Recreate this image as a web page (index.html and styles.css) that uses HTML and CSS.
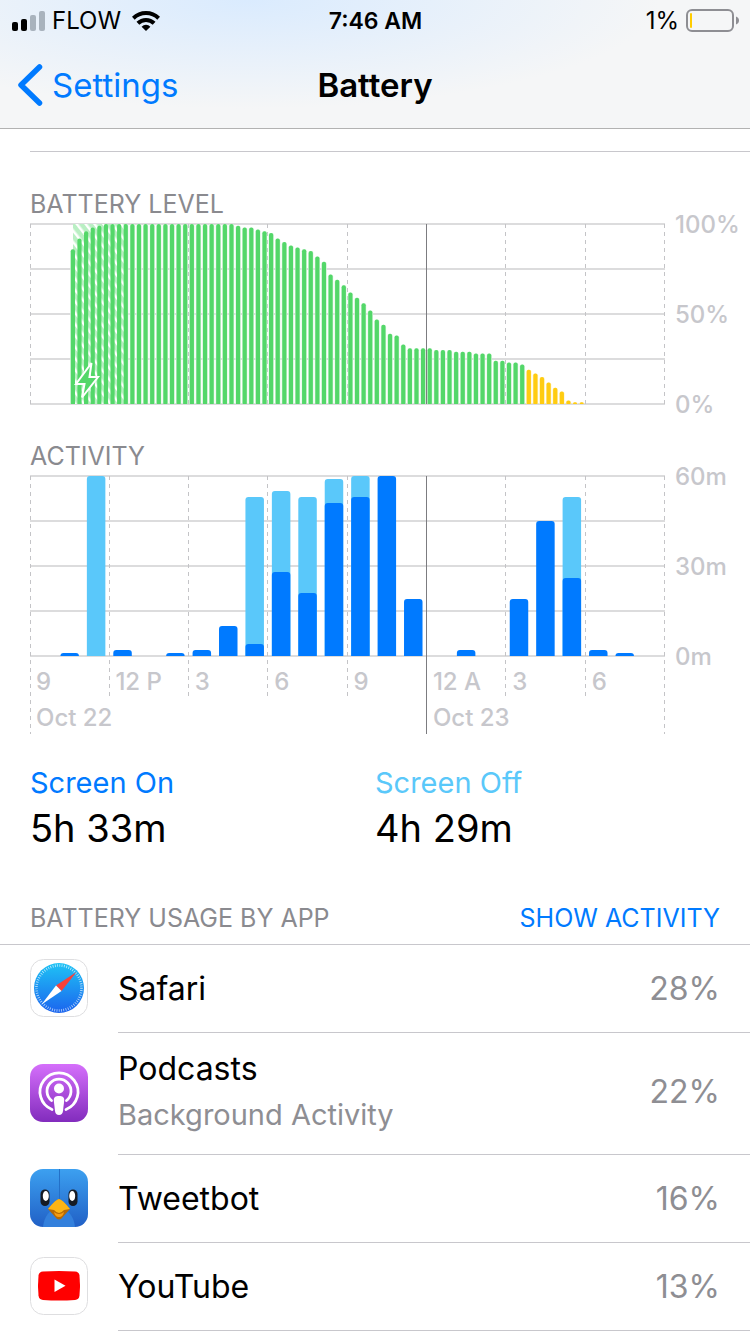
FILE: index.html
```html
<!DOCTYPE html>
<html lang="en">
<head>
    <meta charset="UTF-8">
    <meta name="viewport" content="width=device-width, initial-scale=1.0">
    <title>Battery</title>
    <link rel="stylesheet" href="styles.css">
</head>
<body>
    <header class="top">
        <div class="status">
            <div class="carrier">
                <svg class="signal" width="33" height="20" viewBox="0 0 33 20">
                    <rect x="0" y="11" width="6" height="9" rx="2"/>
                    <rect x="9" y="8" width="6" height="12" rx="2"/>
                    <rect x="18" y="4" width="6" height="16" rx="2" fill="#a9b3bd"/>
                    <rect x="27" y="0" width="6" height="20" rx="2" fill="#a9b3bd"/>
                </svg>
                <span>FLOW</span>
                <svg class="wifi" width="28" height="20" viewBox="0 0 28 20">
                    <g fill="none" stroke="#000" stroke-width="4">
                        <path d="M1.300 7.200a18.200 18.200 0 0 1 25.400 0"/>
                        <path d="M5.900 12.300a11.600 11.600 0 0 1 16.200 0"/>
                    </g>
                    <path d="M14 20l-4.400-4.300a6.200 6.200 0 0 1 8.800 0z"/>
                </svg>
            </div>
            <time class="clock">7:46 AM</time>
            <div class="charge">
                <span>1%</span>
                <svg width="53" height="24" viewBox="0 0 53 24">
                    <rect x="1" y="1" width="46" height="21" rx="5" fill="none" stroke="#8e8e93" stroke-width="2"/>
                    <rect x="4" y="4" width="2" height="15" rx="1" fill="#fc0"/>
                    <path d="M50 7.500q3 1.200 3 4t-3 4z" fill="#8e8e93"/>
                </svg>
            </div>
        </div>
        <nav class="nav">
            <a class="back" href="#">
                <svg width="26" height="42" viewBox="0 0 26 42">
                    <path d="M21.500 3L3 21l18.500 18" fill="none" stroke="#007aff" stroke-width="5.500" stroke-linecap="round" stroke-linejoin="round"/>
                </svg>
                Settings
            </a>
            <h1>Battery</h1>
        </nav>
    </header>

    <main>
        <section class="charts">
            <h2>BATTERY LEVEL</h2>
            <div class="chart">
                <div class="plot">
                    <svg id="level" class="level" viewBox="0 0 635 182" preserveAspectRatio="none">
                        <defs>
                            <pattern id="hatch" width="7" height="8" patternUnits="userSpaceOnUse" patternTransform="rotate(-38)">
                                <rect width="7" height="8" fill="#b9efc3"/>
                                <rect width="2.500" height="8" fill="#fff"/>
                            </pattern>
                        </defs>
                    </svg>
                </div>
                <div class="scale"><span>100%</span><span>50%</span><span>0%</span></div>
            </div>

            <h2>ACTIVITY</h2>
            <div class="chart">
                <div class="plot">
                    <svg id="activity" class="activity" viewBox="0 0 635 259" preserveAspectRatio="none"></svg>
                    <div class="axis">
                        <span>9</span><span>12 P</span><span>3</span><span>6</span>
                        <span>9</span><span>12 A</span><span>3</span><span>6</span>
                        <span class="day">Oct 22</span><span class="day next">Oct 23</span>
                    </div>
                </div>
                <div class="scale"><span>60m</span><span>30m</span><span>0m</span></div>
            </div>
        </section>

        <dl class="totals">
            <div>
                <dt class="on">Screen On</dt>
                <dd>5h 33m</dd>
            </div>
            <div>
                <dt class="off">Screen Off</dt>
                <dd>4h 29m</dd>
            </div>
        </dl>

        <section class="usage">
            <div class="usage-head">
                <h2>BATTERY USAGE BY APP</h2>
                <button type="button">SHOW ACTIVITY</button>
            </div>
            <ul class="apps">
                <li>
                    <svg class="icon" viewBox="0 0 58 58">
                        <defs>
                            <linearGradient id="safari" x2="0" y2="1">
                                <stop offset="0" stop-color="#1fc3f5"/>
                                <stop offset="1" stop-color="#1b64ee"/>
                            </linearGradient>
                        </defs>
                        <rect x=".5" y=".5" width="57" height="57" rx="13" fill="#fff" stroke="#dedee0"/>
                        <circle cx="29" cy="29" r="25" fill="url(#safari)"/>
                        <circle cx="29" cy="29" r="22.500" fill="none" stroke="#fff" stroke-opacity=".7" stroke-width="2.600" stroke-dasharray=".8 1.500"/>
                        <path d="M46.500 13L31.500 32l-5.500-5.500z" fill="#f8413a"/>
                        <path d="M11.500 45.500L26 26.500l5.500 5.500z" fill="#fff"/>
                    </svg>
                    <div class="row">
                        <div class="name">Safari</div>
                        <div class="share">28%</div>
                    </div>
                </li>
                <li>
                    <svg class="icon" viewBox="0 0 58 58">
                        <defs>
                            <linearGradient id="podcasts" x2="0" y2="1">
                                <stop offset="0" stop-color="#d56ffb"/>
                                <stop offset="1" stop-color="#822cbd"/>
                            </linearGradient>
                        </defs>
                        <rect width="58" height="58" rx="13" fill="url(#podcasts)"/>
                        <g fill="none" stroke="#fff" stroke-width="2.800" stroke-linecap="round">
                            <path d="M22 45.500a19 19 0 1 1 14 0"/>
                            <path d="M21.500 36.500a12 12 0 1 1 15 0"/>
                        </g>
                        <circle cx="29" cy="24.500" r="5" fill="#fff"/>
                        <path d="M29 32c3.500 0 5.500 1.400 5.200 4.500l-1.200 10.500c-.3 2.600-1.700 4-4 4s-3.700-1.400-4-4l-1.200-10.500c-.3-3.100 1.700-4.500 5.200-4.500z" fill="#fff"/>
                    </svg>
                    <div class="row tall">
                        <div class="name">Podcasts<small>Background Activity</small></div>
                        <div class="share">22%</div>
                    </div>
                </li>
                <li>
                    <svg class="icon" viewBox="0 0 58 58">
                        <defs>
                            <linearGradient id="tweetbot" x2="0" y2="1">
                                <stop offset="0" stop-color="#3ca0f0"/>
                                <stop offset="1" stop-color="#2160c6"/>
                            </linearGradient>
                        </defs>
                        <rect width="58" height="58" rx="13" fill="url(#tweetbot)"/>
                        <path d="M13 58c1-10 6-17 16-21 10 4 15 11 16 21z" fill="#3380dc"/>
                        <path d="M29.500 0v31" stroke="#2370c8" stroke-width="1"/>
                        <rect x="10.500" y="20.500" width="9" height="16.500" rx="4.500" fill="#161b24"/>
                        <rect x="38.500" y="20.500" width="9" height="16.500" rx="4.500" fill="#161b24"/>
                        <ellipse cx="15.800" cy="27" rx="3" ry="5" fill="#fff"/>
                        <ellipse cx="42.200" cy="27" rx="3" ry="5" fill="#fff"/>
                        <path d="M29 30q2 0 11 10l-8.500 9.500q-2.500 2-5 0L18 40q9-10 11-10z" fill="#b66a05"/>
                        <path d="M29 30q3 0 11 10l-6 1q-5 6-10 0l-6-1q8-10 11-10z" fill="#fdb515"/>
                        <path d="M24 43q5 4 10 0-1 5-5 5t-5-5z" fill="#f59c12"/>
                    </svg>
                    <div class="row">
                        <div class="name">Tweetbot</div>
                        <div class="share">16%</div>
                    </div>
                </li>
                <li>
                    <svg class="icon" viewBox="0 0 58 58">
                        <rect x=".5" y=".5" width="57" height="57" rx="13" fill="#fff" stroke="#dedee0"/>
                        <path d="M13 14.500q16-1 32 0 4 .3 4.500 4 1 10 0 20-.5 4-4.500 4.500-16 1-32 0-4-.5-4.500-4.500-1-10 0-20 .5-3.700 4.500-4z" fill="#f00"/>
                        <path d="M24.500 22.500l11 6.200-11 6.200z" fill="#fff"/>
                    </svg>
                    <div class="row">
                        <div class="name">YouTube</div>
                        <div class="share">13%</div>
                    </div>
                </li>
            </ul>
        </section>
    </main>

    <script src="script.js"></script>
</body>
</html>
```
FILE: styles.css
```css
* {
    box-sizing: border-box;
}
body {
    margin: 0;
    background: #fff;
    color: #000;
    font-family: Inter, "Liberation Sans", sans-serif;
}
h1, h2, dl, dd, ul {
    margin: 0;
    padding: 0;
}
svg {
    display: block;
}
.top {
    background: radial-gradient(ellipse 55% 85% at 33% 0, #daebfe, rgba(246, 247, 249, 0)), #f5f6f7;
    border-bottom: 1px solid #b2b2b2;
}
.status {
    display: grid;
    grid-template-columns: 1fr auto 1fr;
    align-items: center;
    height: 41px;
    padding: 0 11px 0 12px;
    font-size: 24px;
}
.carrier, .charge {
    display: flex;
    align-items: center;
    gap: 7px;
}
.wifi {
    margin-left: 4px;
}
.charge {
    justify-content: flex-end;
}
.clock {
    font-size: 23px;
    font-weight: 600;
}
.nav {
    display: grid;
    grid-template-columns: 1fr auto 1fr;
    align-items: center;
    height: 87px;
    padding: 0 18px;
}
.back {
    display: flex;
    align-items: center;
    gap: 8px;
    color: #007aff;
    font-size: 33px;
    text-decoration: none;
}
h1 {
    font-size: 33px;
    font-weight: 600;
}
h2 {
    color: #8a8a8f;
    font-size: 25px;
    font-weight: 400;
    line-height: 38px;
}
.charts {
    margin: 22px 0 0 30px;
    padding-top: 33px;
    border-top: 1px solid #c8c7cc;
}
.chart {
    display: grid;
    grid-template-columns: 1fr 85px;
}
.chart + h2 {
    margin-top: 32px;
}
.plot {
    display: grid;
}
.plot > * {
    grid-area: 1 / 1;
}
.plot svg {
    width: 100%;
}
.level {
    height: 182px;
}
.activity {
    height: 259px;
}
.scale {
    display: flex;
    flex-direction: column;
    justify-content: space-between;
    height: 204px;
    margin: -10px 0 -12px;
    padding-left: 10px;
    color: #c7c7cc;
    font-size: 24px;
    font-weight: 500;
    line-height: 24px;
}
.axis {
    display: grid;
    grid-template-columns: repeat(8, 1fr);
    align-self: start;
    padding-top: 189px;
    color: #c7c7cc;
    font-size: 24px;
    font-weight: 500;
    line-height: 36px;
}
.axis span {
    padding-left: 6px;
    white-space: nowrap;
}
.axis .day {
    grid-column: 1 / span 5;
}
.axis .next {
    grid-column: 6 / span 3;
}
.totals {
    display: grid;
    grid-template-columns: 1fr 1fr;
    padding: 28px 30px 0;
}
.totals dt {
    font-size: 29px;
    line-height: 38px;
}
.totals dd {
    font-size: 38px;
    line-height: 52px;
}
.on {
    color: #007aff;
}
.off {
    color: #5ac8fa;
}
.usage {
    margin-top: 38px;
}
.usage-head {
    display: flex;
    justify-content: space-between;
    align-items: center;
    padding: 0 30px;
    height: 53px;
    border-bottom: 1px solid #c8c7cc;
}
.usage-head button {
    padding: 0;
    border: none;
    background: none;
    color: #007aff;
    font: inherit;
    font-size: 25px;
    cursor: pointer;
}
.apps {
    list-style: none;
}
.apps li {
    display: flex;
    align-items: center;
    gap: 30px;
    padding-left: 30px;
}
.icon {
    flex: none;
    width: 58px;
    height: 58px;
    margin-bottom: 2px;
}
.row {
    flex: 1;
    display: flex;
    justify-content: space-between;
    align-items: center;
    height: 88px;
    padding-right: 30px;
    border-bottom: 1px solid #c8c7cc;
}
.tall {
    height: 122px;
    padding-bottom: 4px;
}
.name {
    font-size: 32px;
    line-height: 46px;
}
.name small {
    display: block;
    color: #8e8e93;
    font-size: 29px;
}
.share {
    color: #8e8e93;
    font-size: 32px;
}
```
FILE: script.js
```js
const NS = 'http://www.w3.org/2000/svg';
const HOUR = 26.43;

// battery percent, one reading every 15 minutes
const levels = [
    86, 92, 96, 98, 99, 100, 100, 100, 100, 100, 100, 100, 100, 100, 100, 100,
    100, 100, 100, 100, 100, 100, 100, 100, 100, 99, 98, 98, 97, 96, 95, 92,
    90, 88, 87, 86, 85, 82, 79, 72, 69, 66, 62, 59, 56, 52, 47, 44,
    39, 38, 33, 31, 31, 31, 31, 30, 30, 30, 29, 29, 29, 28, 28, 28,
    24, 24, 23, 23, 22, 19, 17, 15, 12, 9, 7, 2, 1, 1
];

// minutes per hour: [screen on, screen on + off]
const activity = [
    [0, 0], [1, 1], [0, 60], [2, 2], [0, 0], [1, 1], [2, 2], [10, 10],
    [4, 53], [28, 55], [21, 53], [51, 59], [53, 60], [60, 60], [19, 19], [0, 0],
    [2, 2], [0, 0], [19, 19], [45, 45], [26, 53], [2, 2], [1, 1], [0, 0]
];

function add(svg, name, attrs) {
    const el = document.createElementNS(NS, name);
    for (const key in attrs) {
        el.setAttribute(key, attrs[key]);
    }
    svg.appendChild(el);
}

function drawGrid(svg, hourEnd, dayEnd) {
    for (let i = 0; i < 5; i++) {
        add(svg, 'path', { d: `M0 ${i * 45 + 1}H635`, stroke: '#dcdcdd', 'stroke-width': 2 });
    }
    for (let i = 0; i <= 8; i++) {
        const end = i % 8 === 0 ? dayEnd : hourEnd;
        const x = Math.floor(i * HOUR * 3) + 0.5;
        if (i !== 5) {
            add(svg, 'path', { d: `M${x} 1V${end}`, stroke: '#c4c4c7', 'stroke-dasharray': '4 4' });
        }
    }
}

function drawMidnight(svg, end) {
    add(svg, 'path', { d: `M396.5 1V${end}`, stroke: '#7c7c80' });
}

// rounded on top, square at the base line
function drawBar(svg, x, width, height, radius, fill) {
    const r = Math.min(radius, height);
    add(svg, 'path', {
        d: `M${x} 181v${r - height}q0 ${-r} ${r} ${-r}h${width - 2 * r}q${r} 0 ${r} ${r}v${height - r}z`,
        fill: fill
    });
}

function drawLevel() {
    const svg = document.getElementById('level');
    drawGrid(svg, 181, 181);
    // pale edge beside every bar
    levels.forEach((value, i) => {
        drawBar(svg, 40.2 + i * HOUR / 4, 5.4, value * 1.8, 2, value < 20 ? '#fff3c4' : '#dcf6e1');
    });
    add(svg, 'rect', { x: 43, y: 1, width: 53, height: 180, fill: 'url(#hatch)' });
    levels.forEach((value, i) => {
        drawBar(svg, 40.8 + i * HOUR / 4, 4.2, value * 1.8, 2, value < 20 ? '#fc1' : '#53d769');
    });
    add(svg, 'path', {
        d: 'M61.500 140L46 161h8.500L52 174.500 68 154h-8.500z',
        fill: '#53d769', stroke: '#fff', 'stroke-width': 2
    });
    drawMidnight(svg, 181);
}

function drawActivity() {
    const svg = document.getElementById('activity');
    drawGrid(svg, 225, 259);
    activity.forEach(([on, total], i) => {
        const x = i * HOUR + 4;
        if (total > on) {
            drawBar(svg, x, 18.5, total * 3, 3, '#5ac8fa');
        }
        if (on) {
            drawBar(svg, x, 18.5, on * 3, 3, '#007aff');
        }
    });
    drawMidnight(svg, 259);
}

drawLevel();
drawActivity();
```
